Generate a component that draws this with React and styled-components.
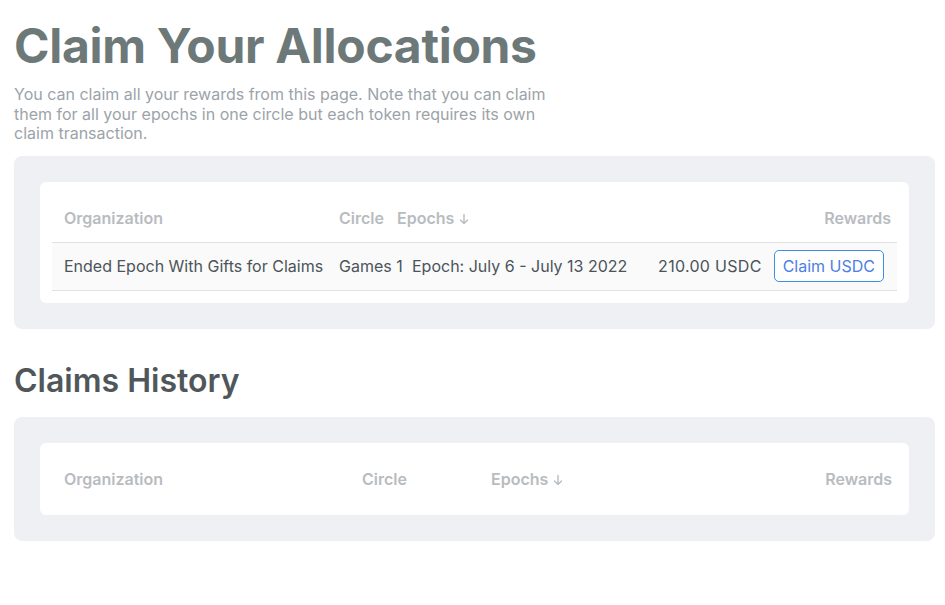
import React from 'react';
import styled, { createGlobalStyle } from 'styled-components';

const Global = createGlobalStyle`
  body {
    margin: 0;
    background: #fff;
    font-family: Inter, "Noto Sans", sans-serif;
  }
`;

const claims = [
  {
    org: 'Ended Epoch With Gifts for Claims',
    circle: 'Games 1',
    epochs: 'Epoch: July 6 - July 13 2022',
    amount: '210.00 USDC',
    token: 'USDC',
  },
];

export default function App() {
  return (
    <Page>
      <Global />
      <Title>Claim Your Allocations</Title>
      <Intro>
        You can claim all your rewards from this page. Note that you can claim
        them for all your epochs in one circle but each token requires its own
        claim transaction.
      </Intro>
      <Panel>
        <Card>
          <Table>
            <colgroup>
              <col style={{ width: 281 }} />
              <col style={{ width: 58 }} />
              <col style={{ width: 15 }} />
              <col style={{ width: 238 }} />
              <col />
            </colgroup>
            <thead>
              <tr>
                <Th>Organization</Th>
                <Th>Circle</Th>
                <Th colSpan={2}>
                  Epochs <Arrow />
                </Th>
                <Th align="right">Rewards</Th>
              </tr>
            </thead>
            <tbody>
              {claims.map(c => (
                <Tr key={c.org}>
                  <Td>{c.org}</Td>
                  <Td colSpan={2}>{c.circle}</Td>
                  <Td>{c.epochs}</Td>
                  <RewardCell>
                    <Rewards>
                      <Amount>{c.amount}</Amount>
                      <ClaimButton>Claim {c.token}</ClaimButton>
                    </Rewards>
                  </RewardCell>
                </Tr>
              ))}
            </tbody>
          </Table>
        </Card>
      </Panel>

      <Heading>Claims History</Heading>
      <Panel>
        <Card>
          <Table>
            <colgroup>
              <col style={{ width: 304 }} />
              <col style={{ width: 129 }} />
              <col style={{ width: 200 }} />
              <col />
            </colgroup>
            <thead>
              <tr>
                <Th>Organization</Th>
                <Th>Circle</Th>
                <Th>
                  Epochs <Arrow />
                </Th>
                <Th align="right" last>
                  Rewards
                </Th>
              </tr>
            </thead>
          </Table>
        </Card>
      </Panel>
    </Page>
  );
}

const Arrow = () => (
  <ArrowSvg viewBox="0 0 12 12" width="12" height="12">
    <path
      d="M6 1.5v9M2.5 7L6 10.5 9.5 7"
      fill="none"
      stroke="currentColor"
      strokeWidth="1.4"
      strokeLinecap="round"
      strokeLinejoin="round"
    />
  </ArrowSvg>
);

const Page = styled.div`
  padding: 14px 10px 40px 14px;
`;

const Title = styled.h1`
  margin: 1px 0 0;
  font-size: 48px;
  line-height: 62px;
  font-weight: 700;
  color: #6d7879;
  letter-spacing: -0.3px;
`;

const Intro = styled.p`
  margin: 8px 0 12px;
  max-width: 545px;
  font-size: 16px;
  line-height: 19.5px;
  color: #9ca3a9;
`;

const Heading = styled.h2`
  margin: 32px 0 16px;
  font-size: 32px;
  line-height: 40px;
  font-weight: 600;
  color: #4f575b;
`;

const Panel = styled.section`
  background: #eff0f4;
  border-radius: 8px;
  padding: 26px;
`;

const Card = styled.div`
  background: #fff;
  border-radius: 6px;
  padding: 12px;
`;

const Table = styled.table`
  width: 100%;
  border-collapse: collapse;
  table-layout: fixed;
  font-size: 16px;
`;

const Th = styled.th`
  height: 48px;
  padding: 0 ${p => (p.last ? 5 : 6)}px 0 6px;
  text-align: ${p => p.align || 'left'};
  font-weight: 600;
  color: #b8bcbf;
  white-space: nowrap;
  &:first-child {
    padding-left: 12px;
  }
`;

const ArrowSvg = styled.svg`
  vertical-align: -1px;
`;

const Tr = styled.tr`
  background: #fafafa;
  border-top: 1px solid #e2e2e2;
  border-bottom: 1px solid #e2e2e2;
`;

const Td = styled.td`
  height: 47px;
  padding: 0 6px;
  color: #4b5459;
  white-space: nowrap;
  &:first-child {
    padding-left: 12px;
  }
`;

const RewardCell = styled(Td)`
  padding-right: 13px;
`;

const Rewards = styled.div`
  display: flex;
  align-items: center;
  justify-content: flex-end;
  gap: 12px;
`;

const Amount = styled.span`
  letter-spacing: 0.3px;
`;

const ClaimButton = styled.button`
  font: inherit;
  font-size: 16px;
  color: #4d80e4;
  background: #fff;
  border: 1px solid #3b8ee8;
  border-radius: 5px;
  height: 32px;
  padding: 0 8px;
  cursor: pointer;
`;
